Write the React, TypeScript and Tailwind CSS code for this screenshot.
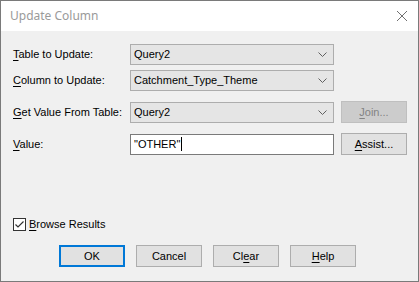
const font = "font-['Liberation_Sans',Arial,sans-serif] text-[11px] text-black";

function Chevron() {
  return (
    <svg width="9" height="5" viewBox="0 0 9 5" className="shrink-0">
      <path d="M0.5 0.5 L4.5 4.5 L8.5 0.5" fill="none" stroke="#606060" strokeWidth="1" />
    </svg>
  );
}

function Combo({ value }: { value: string }) {
  return (
    <div className="flex h-[21px] w-[204px] items-center justify-between border border-[#adadad] bg-[#e5e5e5] pl-[3px] pr-[6px]">
      <span>{value}</span>
      <Chevron />
    </div>
  );
}

function Label({ first, rest }: { first: string; rest: string }) {
  return (
    <div className="w-[117px] shrink-0">
      <span className="underline underline-offset-2">{first}</span>
      {rest}
    </div>
  );
}

function Button({
  children,
  primary = false,
  disabled = false,
}: {
  children: React.ReactNode;
  primary?: boolean;
  disabled?: boolean;
}) {
  let cls = 'border-[#adadad] bg-[#e1e1e1] text-black';
  if (primary) cls = 'border-2 border-[#0078d7] bg-[#e1e1e1] text-black';
  if (disabled) cls = 'border-[#bfbfbf] bg-[#cccccc] text-[#838383]';
  return (
    <div className={`flex h-[22px] w-[66px] items-center justify-center border ${cls}`}>{children}</div>
  );
}

export default function App() {
  return (
    <div className={`flex h-[282px] w-[419px] flex-col border border-[#7a7a7a] bg-white ${font}`}>
      {/* title bar */}
      <div className="flex h-[30px] shrink-0 items-center justify-between bg-white pl-[9px] pr-[9px]">
        <span className="font-['Noto_Sans',sans-serif] text-[12px] text-[#9a9a9a]">Update Column</span>
        <svg width="12" height="12" viewBox="0 0 12 12" className="mr-[1px]">
          <path d="M1 1 L11 11 M11 1 L1 11" stroke="#707070" strokeWidth="1" />
        </svg>
      </div>

      {/* body */}
      <div className="flex flex-1 flex-col bg-[#f0f0f0] pl-[12px] pt-[13px]">
        <div className="flex items-center">
          <Label first="T" rest="able to Update:" />
          <Combo value="Query2" />
        </div>
        <div className="mt-[5px] flex items-center">
          <Label first="C" rest="olumn to Update:" />
          <Combo value="Catchment_Type_Theme" />
        </div>
        <div className="mt-[10px] flex items-center">
          <Label first="G" rest="et Value From Table:" />
          <Combo value="Query2" />
          <div className="ml-[7px]">
            <Button disabled>
              <span className="underline underline-offset-2">J</span>oin...
            </Button>
          </div>
        </div>
        <div className="mt-[10px] flex items-center">
          <Label first="V" rest="alue:" />
          <div className="flex h-[21px] w-[204px] items-center border border-[#7a7a7a] bg-white pl-[3px]">
            <span>"OTHER"</span>
            <span className="ml-[1px] h-[14px] w-[1px] bg-black" />
          </div>
          <div className="ml-[7px]">
            <Button>
              <span className="underline underline-offset-2">A</span>ssist...
            </Button>
          </div>
        </div>

        <div className="mt-[61px] flex h-[16px] items-center">
          <div className="flex h-[13px] w-[13px] items-center justify-center border border-[#333333] bg-white">
            <svg width="11" height="11" viewBox="0 0 11 11">
              <path d="M1.5 5.5 L4 8 L9.5 2.5" fill="none" stroke="#333333" strokeWidth="1.2" />
            </svg>
          </div>
          <span className="ml-[3px]">
            <span className="underline underline-offset-2">B</span>rowse Results
          </span>
        </div>

        <div className="mt-[13px] flex gap-[11px] pl-[46px]">
          <Button primary>OK</Button>
          <Button>Cancel</Button>
          <Button>
            Cl<span className="underline underline-offset-2">e</span>ar
          </Button>
          <Button>
            <span className="underline underline-offset-2">H</span>elp
          </Button>
        </div>
      </div>
    </div>
  );
}
